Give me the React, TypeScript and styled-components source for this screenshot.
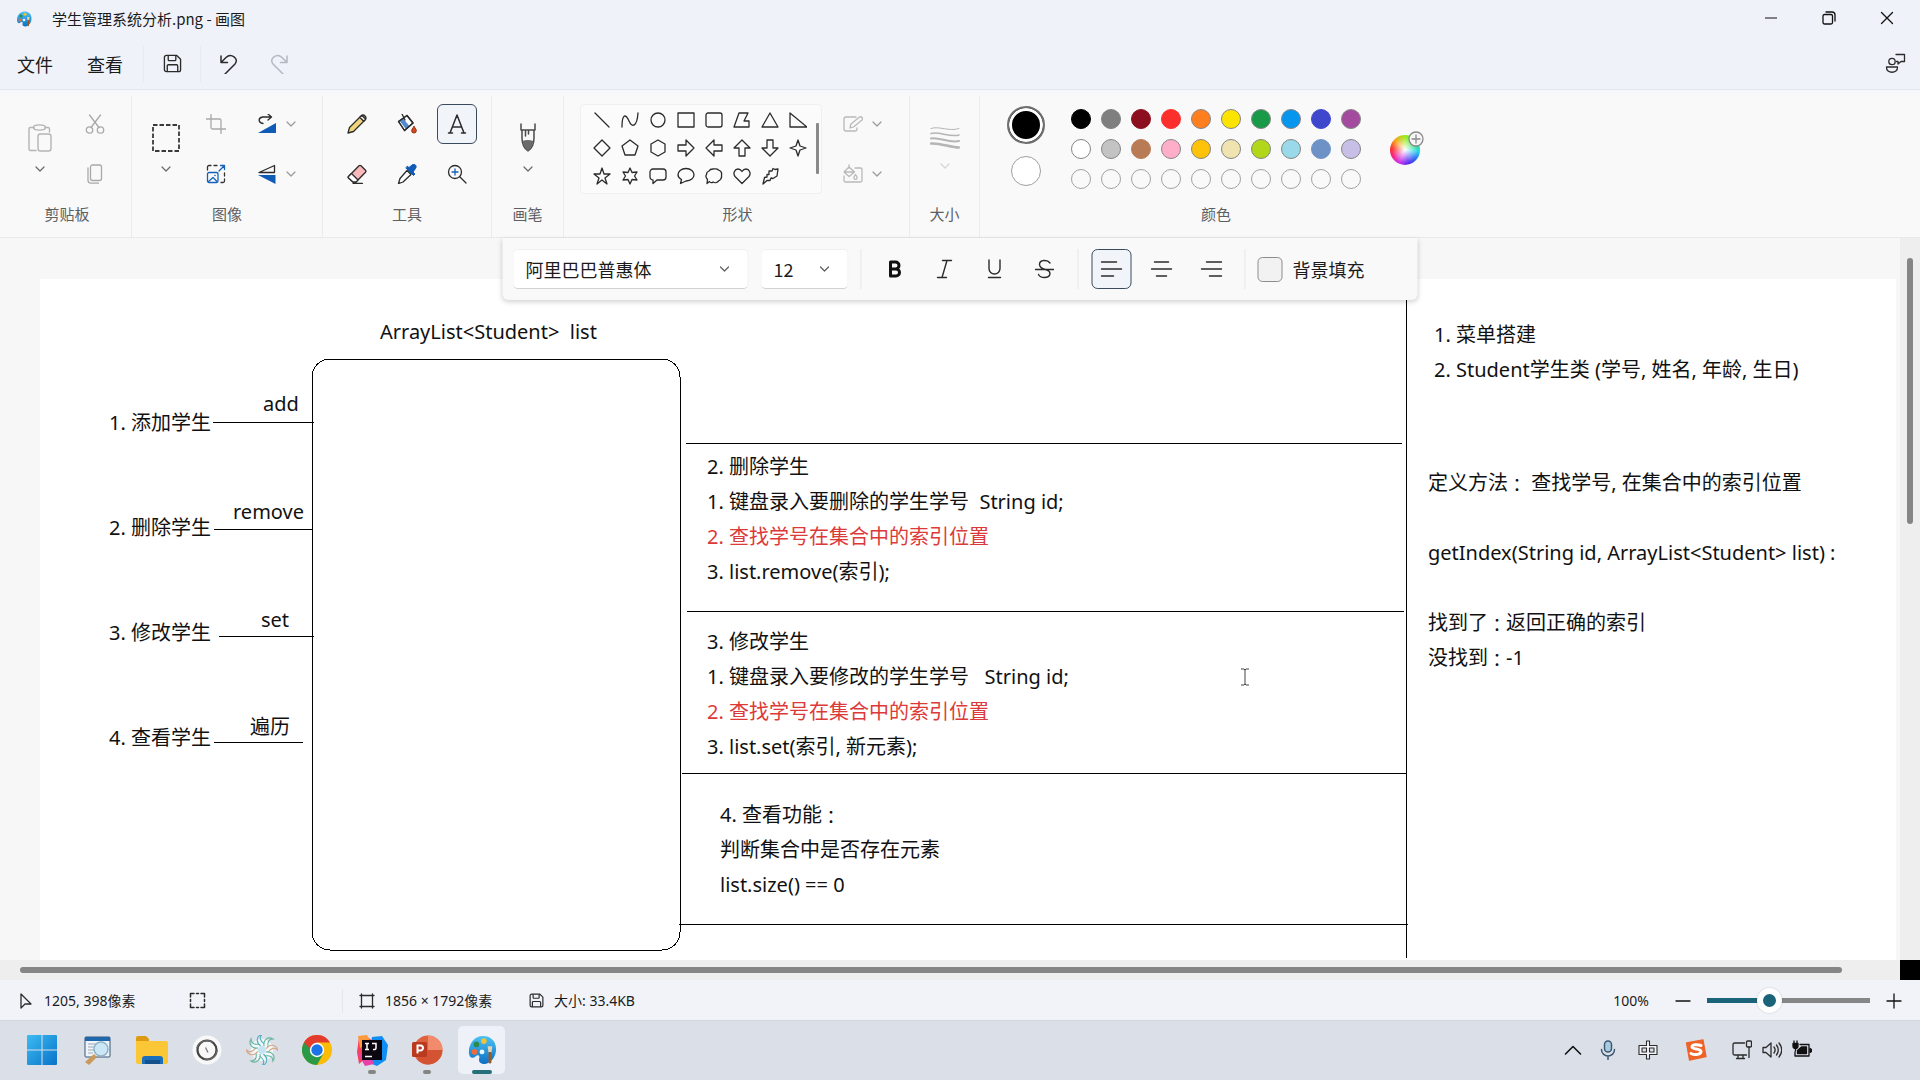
import React, { useState } from "react";
import styled, { createGlobalStyle } from "styled-components";

const UI_FONT = `"Noto Sans CJK SC", "Noto Sans", sans-serif`;
const CANVAS_FONT = `"Noto Sans", "Noto Sans CJK SC", sans-serif`;

const GlobalStyle = createGlobalStyle`
  *, *::before, *::after { box-sizing: border-box; }
  body { margin: 0; background: #eff2f8; overflow: hidden; }
  button { border: 0; padding: 0; margin: 0; background: transparent; font: inherit; color: inherit; }
  svg { display: block; flex: none; }
`;

const Window = styled.div`
  display: flex;
  flex-direction: column;
  height: 100vh;
  font-family: ${UI_FONT};
  color: #1b1b1b;
`;

/* ---------- title bar and menu ---------- */

const TitleBar = styled.header`
  display: flex;
  align-items: center;
  height: 38px;
  padding: 0 4px 0 16px;
  background: #eff2f8;
`;
const AppTitle = styled.h1`
  margin: 0 auto 0 20px;
  font-size: 15px;
  line-height: 20px;
  font-weight: 400;
`;
const CaptionButton = styled.button`
  display: grid;
  place-items: center;
  width: 58px;
  height: 36px;
  align-self: flex-start;
`;
const MenuBar = styled.nav`
  display: flex;
  align-items: center;
  height: 52px;
  background: #eff2f8;
  border-bottom: 1px solid #e3e6ec;
`;
const MenuButton = styled.button`
  width: 70px;
  height: 40px;
  font-size: 18px;
  line-height: 26px;
`;
const MenuIcon = styled.button<{ $end?: boolean }>`
  display: grid;
  place-items: center;
  width: 50px;
  height: 40px;
  margin-left: ${(p) => (p.$end ? "auto" : "0")};
`;
const Rule = styled.span`
  width: 1px;
  height: 36px;
  margin: 0 3px;
  background: #e8eaef;
`;

/* ---------- ribbon ---------- */

const Ribbon = styled.section`
  display: flex;
  height: 148px;
  padding-top: 3px;
  background: #f9f9fa;
  border-top: 3px solid #f5f7fc;
  border-bottom: 1px solid #e9e9e9;
`;
const Group = styled.div<{ $width: number; $inset?: number; $last?: boolean }>`
  display: flex;
  flex-direction: column;
  width: ${(p) => p.$width}px;
  padding: 3px 0 0 ${(p) => p.$inset ?? 0}px;
  border-right: ${(p) => (p.$last ? "0" : "1px solid #ececee")};
`;
const GroupBody = styled.div<{ $gap?: number }>`
  display: flex;
  align-items: center;
  justify-content: center;
  gap: ${(p) => p.$gap ?? 0}px;
  height: 100px;
`;
const GroupLabel = styled.span`
  font-size: 15px;
  line-height: 30px;
  text-align: center;
  color: #5f5f5f;
`;
const BigButton = styled.button<{ $faded?: boolean }>`
  display: flex;
  flex-direction: column;
  align-items: center;
  justify-content: center;
  gap: 10px;
  width: 50px;
  height: 80px;
  color: ${(p) => (p.$faded ? "#d6d6d6" : "#6a6a6a")};
`;
const CellGrid = styled.div<{ $columns: string }>`
  display: grid;
  grid-template-columns: ${(p) => p.$columns};
  grid-auto-rows: 50px;
  place-items: center;
`;
const ToolButton = styled.button<{ $active?: boolean }>`
  display: grid;
  place-items: center;
  width: 40px;
  height: 40px;
  border-radius: 6px;
  border: 1px solid ${(p) => (p.$active ? "#3c4b5c" : "transparent")};
  background: ${(p) => (p.$active ? "#f1f4f8" : "transparent")};
`;
const SplitButton = styled.button`
  display: flex;
  align-items: center;
  justify-content: center;
  gap: 8px;
  width: 64px;
  height: 40px;
  color: #9a9a9a;
`;
const ShapeBox = styled.div`
  display: flex;
  width: 242px;
  height: 90px;
  padding: 1px 0 0 7px;
  border: 1px solid #f0f0f0;
  border-radius: 4px;
  background: #fbfbfb;
`;
const ShapeGrid = styled.div`
  display: grid;
  grid-template-columns: repeat(8, 28px);
  grid-auto-rows: 28px;
`;
const ShapeButton = styled.button`
  display: grid;
  place-items: center;
`;
const ShapeThumb = styled.span`
  width: 3px;
  height: 51px;
  margin: 17px 0 0 4px;
  border-radius: 1px;
  background: #8a8a8a;
`;

/* ---------- colours ---------- */

const ActiveColours = styled.div`
  display: flex;
  flex-direction: column;
  align-items: center;
  gap: 12px;
  width: 40px;
  height: 100px;
  padding-top: 7px;
`;
const ActiveColour = styled.button<{ $size: number; $color: string; $ring?: boolean }>`
  width: ${(p) => p.$size}px;
  height: ${(p) => p.$size}px;
  border-radius: 50%;
  border: ${(p) => (p.$ring ? "2px solid #6f6f6f" : "1px solid #a0a0a0")};
  background: ${(p) => p.$color};
  box-shadow: ${(p) => (p.$ring ? "inset 0 0 0 3px #ffffff" : "none")};
`;
const SwatchGrid = styled.div`
  display: grid;
  grid-template-columns: repeat(10, 30px);
  grid-auto-rows: 30px;
  place-items: center;
`;
const Swatch = styled.button<{ $color: string; $edge: string }>`
  width: 20px;
  height: 20px;
  border-radius: 50%;
  border: 1px solid ${(p) => p.$edge};
  background: ${(p) => p.$color};
`;
const WheelButton = styled.button`
  position: relative;
  width: 40px;
  height: 40px;
  padding: 2px 0 0 4px;
`;
const Wheel = styled.span`
  display: block;
  width: 30px;
  height: 30px;
  border-radius: 50%;
  background: radial-gradient(circle, #ffffff 0%, rgba(255, 255, 255, 0) 62%),
    conic-gradient(#9bee1c, #2de06b 60deg, #20d8e8 95deg, #2a6cf4 130deg, #5a2cf0 165deg, #d136ea 205deg, #f5268c 240deg, #fb2f2f 275deg, #f9a51c 315deg, #9bee1c 360deg);
`;
const WheelBadge = styled.span`
  position: absolute;
  left: 22px;
  top: 2px;
`;

/* ---------- workspace ---------- */

const Workspace = styled.main`
  position: relative;
  display: grid;
  grid-template: minmax(0, 1fr) 20px / minmax(0, 1fr) 20px;
  flex: 1;
  min-height: 0;
  background: #eeeeef;
`;
const Viewport = styled.div`
  padding: 41px 4px 0 40px;
  overflow: hidden;
  background: #f7f7f8;
`;
const Paper = styled.div`
  position: relative;
  height: 100%;
  background: #ffffff;
`;
const VerticalTrack = styled.div`
  display: flex;
  justify-content: center;
  padding: 20px 0;
`;
const VerticalThumb = styled.span`
  width: 6px;
  height: 39%;
  border-radius: 3px;
  background: #858585;
`;
const HorizontalTrack = styled.div`
  display: flex;
  align-items: center;
  padding: 0 58px 0 20px;
`;
const HorizontalThumb = styled.span`
  flex: 1;
  height: 6px;
  border-radius: 3px;
  background: #858585;
`;
const Corner = styled.span`
  background: #000000;
`;
const Drawing = styled.svg`
  position: absolute;
  inset: 0;
  width: 100%;
  height: 100%;
`;
const Note = styled.div<{ $x: number; $y: number }>`
  position: absolute;
  left: ${(p) => p.$x}px;
  top: ${(p) => p.$y}px;
  font-family: ${CANVAS_FONT};
  font-size: 20px;
  line-height: 35px;
  white-space: pre;
  color: #111111;
`;
const NoteLine = styled.p<{ $red?: boolean }>`
  margin: 0;
  height: 35px;
  color: ${(p) => (p.$red ? "#dc3a3a" : "inherit")};
`;
const WideColon = styled.span`
  font-family: "Noto Sans CJK TC", sans-serif;
  font-size: 18px;
  line-height: 20px;
  vertical-align: -2px;
`;
const TextCursor = styled.span`
  position: absolute;
  left: 1201px;
  top: 389px;
`;

/* ---------- floating text toolbar ---------- */

const TextToolbar = styled.div`
  position: absolute;
  top: 0;
  left: 50%;
  transform: translateX(-50%);
  display: flex;
  align-items: center;
  height: 62px;
  padding: 0 53px 0 10px;
  background: #f9f9fa;
  border-radius: 0 0 6px 6px;
  box-shadow: 0 2px 5px rgba(0, 0, 0, 0.18);
`;
const SelectBox = styled.span<{ $width: number; $after: number }>`
  position: relative;
  width: ${(p) => p.$width}px;
  height: 40px;
  margin-right: ${(p) => p.$after}px;
`;
const Select = styled.select`
  appearance: none;
  width: 100%;
  height: 100%;
  padding: 0 36px 0 12px;
  border: 1px solid #efefef;
  border-bottom-color: #d2d2d2;
  border-radius: 5px;
  background: #ffffff;
  font-family: ${UI_FONT};
  font-size: 18px;
  color: #1b1b1b;
`;
const SelectArrow = styled.span`
  position: absolute;
  right: 18px;
  top: 14px;
  color: #5c5c5c;
  pointer-events: none;
`;
const Slot = styled.span`
  display: grid;
  place-items: center;
  width: 50px;
`;
const ToolbarRule = styled.span`
  width: 1px;
  height: 40px;
  margin: 0 8px;
  background: #e8e8e8;
`;
const FillLabel = styled.label`
  display: flex;
  align-items: center;
  gap: 10px;
  padding-left: 4px;
  font-size: 18px;
  line-height: 26px;
`;
const CheckBox = styled.input`
  appearance: none;
  width: 25px;
  height: 25px;
  margin: 0;
  border: 1px solid #8c8c8c;
  border-radius: 5px;
  background: #f2f2f2;
`;

/* ---------- status bar ---------- */

const StatusBar = styled.footer`
  display: flex;
  align-items: center;
  height: 40px;
  padding: 1px 18px 0 19px;
  background: #f1f3f9;
  font-family: ${CANVAS_FONT};
  font-size: 14px;
  line-height: 20px;
`;
const StatusItem = styled.span<{ $width?: number; $rule?: boolean; $inset?: number }>`
  display: flex;
  align-items: center;
  gap: 10px;
  height: 24px;
  width: ${(p) => (p.$width ? `${p.$width}px` : "auto")};
  padding-left: ${(p) => p.$inset ?? 0}px;
  border-right: ${(p) => (p.$rule ? "1px solid #e4e6ec" : "0")};
`;
const ZoomControls = styled.div`
  display: flex;
  align-items: center;
  gap: 16px;
  margin-left: auto;
`;
const ZoomValue = styled.span`
  margin-right: 10px;
`;
const ZoomStep = styled.button`
  display: grid;
  place-items: center;
  width: 16px;
  height: 24px;
`;
const ZoomSlider = styled.input<{ $fill: number }>`
  appearance: none;
  width: 163px;
  height: 26px;
  margin: 0;
  background: linear-gradient(90deg, #1b6379 ${(p) => p.$fill}%, #868686 ${(p) => p.$fill}%) center / 100% 5px no-repeat;
  &::-webkit-slider-thumb {
    appearance: none;
    width: 25px;
    height: 25px;
    border: 6px solid #ffffff;
    border-radius: 50%;
    background: #1b6379;
    box-shadow: 0 0 2px rgba(0, 0, 0, 0.2);
  }
`;

/* ---------- taskbar ---------- */

const Taskbar = styled.div`
  display: flex;
  align-items: center;
  height: 60px;
  padding: 0 103px 2px 14px;
  background: #dbdfe8;
  border-top: 1px solid #d2d6dd;
`;
const TaskButton = styled.button<{ $active?: boolean }>`
  position: relative;
  display: grid;
  place-items: center;
  width: 47px;
  height: 48px;
  margin: 0 4px;
  border-radius: 5px;
  background: ${(p) => (p.$active ? "#eef1f8" : "transparent")};
`;
const RunMark = styled.span<{ $active?: boolean }>`
  position: absolute;
  bottom: 0;
  left: 50%;
  width: ${(p) => (p.$active ? 20 : 8)}px;
  height: 4px;
  transform: translateX(-50%);
  border-radius: 2px;
  background: ${(p) => (p.$active ? "#26707a" : "#858585")};
`;
const Tray = styled.div`
  display: flex;
  margin-left: auto;
`;
const TrayButton = styled.button<{ $after?: number }>`
  display: grid;
  place-items: center;
  width: 30px;
  height: 40px;
  margin-right: ${(p) => p.$after ?? 0}px;
`;

/* ---------- icons ---------- */

type IconProps = { w?: number; h?: number; stroke?: string; sw?: number; children: React.ReactNode };
const Icon = ({ w = 20, h = w, stroke = "#2b2b2b", sw = 1.3, children }: IconProps) => (
  <svg width={w} height={h} viewBox={`0 0 ${w} ${h}`} fill="none" stroke={stroke} strokeWidth={sw} strokeLinecap="round" strokeLinejoin="round" aria-hidden="true">
    {children}
  </svg>
);

const Chevron = ({ stroke = "currentColor" }: { stroke?: string }) => (
  <Icon w={12} stroke={stroke} sw={1.2}><path d="M2 4l4 4 4-4" /></Icon>
);

const SaveIcon = ({ size = 20 }: { size?: number }) => (
  <svg width={size} height={size} viewBox="0 0 20 20" fill="none" stroke="#2b2b2b" strokeWidth={size < 18 ? 1.6 : 1.4} strokeLinejoin="round" aria-hidden="true">
    <path d="M3.500 1.500h11l4 4v11a2 2 0 0 1-2 2h-13a2 2 0 0 1-2-2v-13a2 2 0 0 1 2-2z" />
    <path d="M5.500 1.500v4.500a1 1 0 0 0 1 1h6a1 1 0 0 0 1-1V1.500M4.500 18.500v-6a1.200 1.200 0 0 1 1.200-1.200h8.600a1.200 1.200 0 0 1 1.200 1.200v6" />
  </svg>
);

const PaletteIcon = ({ size }: { size: number }) => (
  <svg width={size} height={size} viewBox="0 0 32 32" aria-hidden="true">
    <defs>
      <linearGradient id={`palette${size}`} x1="0" y1="0" x2="0" y2="1">
        <stop offset="0" stopColor="#4cc3f4" />
        <stop offset="1" stopColor="#0c6fc4" />
      </linearGradient>
    </defs>
    <path d="M17 1C8 1 2 9 2 18c0 6 4 8 7 5 3-3 5-1 4 2-1 4 2 6 6 6 7-1 12-8 12-16C31 6 25 1 17 1z" fill={`url(#palette${size})`} />
    <circle cx="8" cy="18" r="3" fill="#ee6b3b" />
    <circle cx="10" cy="10" r="3" fill="#2d8a4d" />
    <circle cx="18" cy="6.500" r="3" fill="#f2c230" />
    <circle cx="16" cy="18" r="2.600" fill="#e9f6ff" />
    <path d="M22 12h5l-1 7h-3z" fill="#e8d3b4" />
    <path d="M23 18h3v11a1.500 1.500 0 0 1-3 0z" fill="#9a5b22" />
  </svg>
);

const PasteIcon = () => (
  <Icon w={26} h={30} stroke="#b5b5b5" sw={1.4}>
    <path d="M7 4.500H3.500a1.500 1.500 0 0 0-1.500 1.500v20A1.500 1.500 0 0 0 3.500 27.500H9M18 4.500h3a1.500 1.500 0 0 1 1.500 1.500v3" />
    <ellipse cx="12.500" cy="4.500" rx="6" ry="2.600" />
    <rect x="11" y="11" width="13" height="17" rx="2.500" />
  </Icon>
);
const CutIcon = () => (
  <Icon stroke="#a9a9a9"><circle cx="4.500" cy="16" r="3.200" /><circle cx="15.500" cy="16" r="3.200" /><path d="M4.500 1l9.500 12.500M15.500 1L6 13.500" /></Icon>
);
const CopyIcon = () => (
  <Icon stroke="#a9a9a9"><rect x="5.500" y="1" width="11" height="15.500" rx="2" /><path d="M3 4v12.500A3 3 0 0 0 6 19.200h7.500" /></Icon>
);
const SelectIcon = () => (
  <Icon w={30} stroke="#3a3a3a" sw={1.8}><path d="M2 2h26v26H2z" strokeDasharray="4.500 2" strokeLinecap="butt" /></Icon>
);
const CropIcon = () => (
  <Icon stroke="#a9a9a9"><path d="M5 0v13.500a1.500 1.500 0 0 0 1.500 1.500H20M0 5h13.500A1.500 1.500 0 0 1 15 6.500V20" /></Icon>
);
const ResizeIcon = () => (
  <Icon>
    <path d="M1.500 6V3a1.500 1.500 0 0 1 1.500-1.500h2M8 1.500h3M18.500 9v3M18.500 15v2a1.500 1.500 0 0 1-1.500 1.500h-2" stroke="#333333" />
    <path d="M13 7l5.500-5.500M14.500 1.500h4v4" stroke="#1462b8" />
    <rect x="1.500" y="8.500" width="10.500" height="10" rx="1.500" stroke="#1462b8" />
    <path d="M2.500 17.500l4.500-4 4 4" stroke="#1462b8" />
    <circle cx="9" cy="11.500" r=".8" fill="#1462b8" stroke="none" />
  </Icon>
);
const RotateIcon = () => (
  <Icon><path d="M6 9.500C1.500 9 .5 4 5.500 3H14M11 0l3.500 3L11 6" /><path d="M1 19L19 9v10z" fill="#0f5bb5" stroke="none" /></Icon>
);
const FlipIcon = () => (
  <Icon><path d="M17.500 1.500v7H2z" /><path d="M1 11h17.500v9z" fill="#0f5bb5" stroke="none" /></Icon>
);
const PencilIcon = () => (
  <Icon><path d="M1 19l1.500-5.500L14 2a2.600 2.600 0 0 1 4 4L6.500 17.500z" fill="#efd67c" /><path d="M12.700 3.300l4 4L18.500 5 15 1.500z" fill="#f4f4f4" /></Icon>
);
const BucketIcon = () => (
  <Icon>
    <path d="M1.500 7.500L10 1.500l6 7.500-8.500 7.500z" fill="#ffffff" />
    <path d="M2.500 6.800l3.500-2.500 6.500 8-3.500 3z" fill="#1965ba" stroke="none" opacity=".75" />
    <path d="M1.500 7.500L10 1.500l6 7.500-8.500 7.500zM5 0l3 6" />
    <path d="M17 12.500c1.500 2 2.300 3 2.300 4.200a2.300 2.300 0 0 1-4.600 0c0-1.200.8-2.200 2.300-4.200z" fill="#d9481f" stroke="#8f2b10" strokeWidth="1" />
  </Icon>
);
const TextIcon = () => (
  <Icon w={22} sw={1.5}><path d="M4 20L11 2l7 18M6.500 14h9M2.500 20h4M15.500 20h4" /></Icon>
);
const EraserIcon = () => (
  <Icon><path d="M1.500 12.500L12 1.800a1.500 1.500 0 0 1 2 0l4.500 4.400a1.500 1.500 0 0 1 0 2L9 18H6l-4.500-4a1 1 0 0 1 0-1.500z" fill="#f9b9bb" /><path d="M1.500 12.500l3-3 6.500 6.500-2 2H6l-4.500-4a1 1 0 0 1 0-1.500z" fill="#fff" /><path d="M6 19.300h9.500" /></Icon>
);
const PickerIcon = () => (
  <Icon><path d="M10 6.500l4 4-8 7.500-4.500 1.500L3 14.500z" fill="#fff" /><path d="M9 4l7.500 7.500 1.500-1.500-2-2 2.500-3.500c2-2.500-1-5.500-3.500-3.500L12 3.500 10.500 2.500z" fill="#0f5bb5" stroke="#0f5bb5" strokeWidth="1" /></Icon>
);
const MagnifierIcon = () => (
  <Icon><circle cx="8" cy="8" r="6.500" /><path d="M13 13l6 6" /><path d="M8 5v6M5 8h6" stroke="#1462b8" /></Icon>
);
const BrushIcon = () => (
  <Icon w={18} h={30} stroke="#4a4a4a" sw={1.5}>
    <path d="M2 1v6h14V1M3 7v8c0 6 3 11 6 13 3-2 6-7 6-13V7M6.500 8v5M9.500 8v3" />
    <path d="M3.500 18c3-1.500 7-1.500 11 0-.7 4-3 8-5.500 10-2.500-2-4.800-6-5.500-10z" fill="#6b6b6b" stroke="none" />
  </Icon>
);
const OutlineIcon = () => (
  <Icon stroke="#b9b9b9"><path d="M13 3H3a2 2 0 0 0-2 2v10a2 2 0 0 0 2 2h9a2 2 0 0 0 2-2v-1" /><path d="M7 14l1-4 8.500-7a2 2 0 0 1 2.500 3L10.500 13z" /></Icon>
);
const FillIcon = () => (
  <Icon stroke="#b9b9b9"><path d="M12 4h5.500A1.500 1.500 0 0 1 19 5.500v11a1.500 1.500 0 0 1-1.500 1.500H2.500A1.500 1.500 0 0 1 1 16.500V12M6 1v3M1 8l5-5 5.500 5L6 12.500zM1 8h10M12.500 10.500c1 1.500 1.600 2.200 1.600 3.200a1.600 1.600 0 0 1-3.200 0c0-1 .6-1.700 1.600-3.200z" /></Icon>
);
const SizeIcon = () => (
  <Icon w={30} h={24} stroke="#b5b5b5" sw={1}>
    <path d="M1 2.500c8-3 18 3.500 28 0" strokeWidth="1" /><path d="M1 7.500c8-3 18 4.500 28 1.500" strokeWidth="1.500" />
    <path d="M1 12.500c8-2 18 5 28 2.500" strokeWidth="2" /><path d="M1 17.500c8-1 20 4 28 4" strokeWidth="2.500" />
  </Icon>
);

const SHAPES: [string, string][] = [
  ["直线", "M2 2l14 14"],
  ["曲线", "M1 16c0-14 4-13 7-6s8 6 9-8"],
  ["椭圆", "M9 2a7 7 0 1 0 0 14A7 7 0 1 0 9 2z"],
  ["矩形", "M1 2h16v14H1z"],
  ["圆角矩形", "M3 2h12a2 2 0 0 1 2 2v10a2 2 0 0 1-2 2H3a2 2 0 0 1-2-2V4a2 2 0 0 1 2-2z"],
  ["多边形", "M6 2h9l-4 8h5v6H1z"],
  ["三角形", "M9 2l8 14H1z"],
  ["直角三角形", "M1 2v14h17z"],
  ["菱形", "M9 1l8 8-8 8-8-8z"],
  ["五边形", "M9 1l8 6-3 9H4L1 7z"],
  ["六边形", "M9 1l7 4v8l-7 4-7-4V5z"],
  ["右箭头", "M1 6h8V1l8 8-8 8v-5H1z"],
  ["左箭头", "M17 6H9V1L1 9l8 8v-5h8z"],
  ["上箭头", "M6 17V9H1l8-8 8 8h-5v8z"],
  ["下箭头", "M6 1v8H1l8 8 8-8h-5V1z"],
  ["四角星", "M9 1l2 6 6 2-6 2-2 6-2-6-6-2 6-2z"],
  ["五角星", "M9 1l2 6h6l-5 4 2 6-5-4-5 4 2-6-5-4h6z"],
  ["六角星", "M9 1l2 4.500 5-.5-2.500 4 2.500 4-5-.5L9 17l-2-4.500-5 .5 2.500-4L2 5l5 .5z"],
  ["圆角标注", "M4 2h10a3 3 0 0 1 3 3v5a3 3 0 0 1-3 3H8l-4 3.500V13a3 3 0 0 1-3-3V5a3 3 0 0 1 3-3z"],
  ["椭圆标注", "M9 1.500c5 0 8 3 8 6.200S14 14 9 14l-5.500 2.500 1-4C2.500 11.500 1 10 1 7.700 1 4.500 4 1.500 9 1.500z"],
  ["云形标注", "M4 4c1-2 3-2 4-2s4-1 5.500 1C16 4 17 6 16.500 8c.5 3-1 5-3 6-1.500 2-4 2-5.500 1-1 1-2.500 1-3.500-.5L2 16.500l.5-4C1 11 .5 9 1.500 7.500 1.500 5.500 2.500 4.500 4 4z"],
  ["心形", "M9 16.500L2 9.500C-.5 6 2 2 5 2c2 0 3 1 4 2.500C10 3 11 2 13 2c3 0 5.500 4 3 7.500z"],
  ["闪电", "M8 4h3l1-2.500 2 1L17 2l-1 7-4 2.500-2-.5-1 2.500H6L2 17l1.500-6.500L6 10V7.500h2z"],
];

const COLOURS = [
  "#000000", "#7f7f7f", "#8c0f1f", "#fb2f2b", "#ff7f1f", "#fde400", "#189a49", "#0796ee", "#3f48cc", "#a44ba0",
  "#ffffff", "#c3c3c3", "#b97a56", "#ffaec9", "#ffc20a", "#efe4b0", "#b1d718", "#99d9ea", "#6f92c6", "#c8bfe7",
];
const DARK = new Set(["#000000", "#7f7f7f", "#8c0f1f", "#fb2f2b", "#b97a56", "#3f48cc", "#6f92c6"]);

type NoteData = { x: number; y: number; lines: string[]; red?: number };
const NOTES: NoteData[] = [
  { x: 340, y: 35, lines: ["ArrayList<Student>  list"] },
  { x: 223, y: 107, lines: ["add"] },
  { x: 193, y: 215, lines: ["remove"] },
  { x: 221, y: 323, lines: ["set"] },
  { x: 210, y: 430, lines: ["遍历"] },
  { x: 69, y: 126, lines: ["1. 添加学生"] },
  { x: 69, y: 231, lines: ["2. 删除学生"] },
  { x: 69, y: 336, lines: ["3. 修改学生"] },
  { x: 69, y: 441, lines: ["4. 查看学生"] },
  { x: 667, y: 170, red: 2, lines: ["2. 删除学生", "1. 键盘录入要删除的学生学号  String id;", "2. 查找学号在集合中的索引位置", "3. list.remove(索引);"] },
  { x: 667, y: 345, red: 2, lines: ["3. 修改学生", "1. 键盘录入要修改的学生学号   String id;", "2. 查找学号在集合中的索引位置", "3. list.set(索引, 新元素);"] },
  { x: 680, y: 518, lines: ["4. 查看功能：", "判断集合中是否存在元素", "list.size() == 0"] },
  { x: 1394, y: 38, lines: ["1. 菜单搭建", "2. Student学生类 (学号, 姓名, 年龄, 生日)"] },
  { x: 1388, y: 186, lines: ["定义方法： 查找学号, 在集合中的索引位置", "", "getIndex(String id, ArrayList<Student> list) :", "", "找到了：返回正确的索引", "没找到：-1"] },
];

const withColons = (line: string) =>
  line.split("：").map((part, i) => (
    <React.Fragment key={i}>
      {i > 0 && <WideColon>：</WideColon>}
      {part}
    </React.Fragment>
  ));

const CanvasDrawing = () => (
  <Drawing fill="none" stroke="#000000" shapeRendering="crispEdges" aria-hidden="true">
    <rect x="272" y="80" width="368" height="591" rx="18" />
    <path d="M173 143h101M174 250h98M179 357h95M174 463h89" />
    <path d="M646 164h716M647 332h717M642 494h724M639 645h729" />
    <path d="M1366 0v679" />
  </Drawing>
);

/* ---------- taskbar pictures ---------- */

const StartIcon = () => (
  <svg width="30" height="30" viewBox="0 0 30 30" aria-hidden="true">
    <defs><linearGradient id="start" x1="0" y1="0" x2="1" y2="1"><stop offset="0" stopColor="#3cbcf2" /><stop offset="1" stopColor="#0872c9" /></linearGradient></defs>
    <path d="M1 0h13.500v14.500H0V1a1 1 0 0 1 1-1zM15.500 0H29a1 1 0 0 1 1 1v13.500H15.500zM0 15.500h14.500V30H1a1 1 0 0 1-1-1zM15.500 15.500H30V29a1 1 0 0 1-1 1H15.500z" fill="url(#start)" />
  </svg>
);
const SearchAppIcon = () => (
  <svg width="30" height="30" viewBox="0 0 30 30" aria-hidden="true">
    <rect x="3" y="2" width="25" height="20" rx="1" fill="#eef4f8" stroke="#3b5676" /><path d="M3 2h25v4H3z" fill="#1e67ad" />
    <path d="M6 9h10M6 12h8M6 15h7M6 18h5" stroke="#9aa9b5" />
    <path d="M12 19l3 3-8 8-4-3z" fill="#c99a5b" /><circle cx="19" cy="14" r="7" fill="#c6e6f6" fillOpacity=".9" stroke="#8fb3c5" strokeWidth="1.500" />
  </svg>
);
const FolderIcon = () => (
  <svg width="32" height="28" viewBox="0 0 32 28" aria-hidden="true">
    <path d="M0 2a2 2 0 0 1 2-2h8l3 3v4H0z" fill="#dd9b12" /><path d="M0 5h30a2 2 0 0 1 2 2v19a2 2 0 0 1-2 2H2a2 2 0 0 1-2-2z" fill="#fcc736" />
    <path d="M6 28v-5a3 3 0 0 1 3-3h15a3 3 0 0 1 3 3v5z" fill="#1a6fba" /><path d="M9 24h15v4H9z" fill="#14508c" />
  </svg>
);
const RingAppIcon = () => (
  <svg width="30" height="30" viewBox="0 0 30 30" fill="none" aria-hidden="true">
    <circle cx="15" cy="15" r="14.500" fill="#f8f8f8" /><circle cx="15" cy="15" r="9.500" stroke="#444" strokeWidth="2.200" /><path d="M5 13c1-6 8-9 16-6M25 15c0 6-6 11-13 9" stroke="#666" strokeWidth="1.500" /><path d="M13.500 12.500l2.500 5" stroke="#777" strokeWidth="1.300" />
  </svg>
);
const SwirlIcon = () => (
  <svg width="32" height="30" viewBox="-16 -15 32 30" fill="none" aria-hidden="true">
    <circle r="11" fill="#f2f8fa" />
    {[0, 45, 90, 135, 180, 225, 270, 315].map((a, i) => (
      <g key={a} transform={`rotate(${a})`}>
        <path d="M2-4C1-10 6-14 11-11C7-11 5-8 6-3" stroke={i % 4 === 1 ? "#d8a685" : i % 2 ? "#53aebb" : "#63b59b"} strokeWidth="1.100" />
      </g>
    ))}
    <circle r="4" fill="#c3e4f0" />
  </svg>
);
const ChromeIcon = () => (
  <svg width="30" height="30" viewBox="0 0 30 30" aria-hidden="true">
    <circle cx="15" cy="15" r="15" fill="#fbbc05" />
    <path d="M2 7.500A15 15 0 0 0 15 30l6.500-11.500L15 15z" fill="#2b9a48" />
    <path d="M2 7.500l6.500 11.200L15 15V7.500L8 5z" fill="#2b9a48" /><path d="M2 7.500A15 15 0 0 1 28 7.500H15a7.500 7.500 0 0 0-7 5.500z" fill="#e33b2e" />
    <path d="M2 7.500l6.500 11.200 1-5.700L8 5z" fill="#2b9a48" /><path d="M2 7.500A15 15 0 0 1 10 1l3 7-5 5.500z" fill="#e33b2e" />
    <circle cx="15" cy="15" r="7.200" fill="#fff" /><circle cx="15" cy="15" r="5.700" fill="#1a73e8" />
  </svg>
);
const IdeaIcon = () => (
  <svg width="32" height="32" viewBox="0 0 32 32" aria-hidden="true">
    <path d="M3 3l7-1 8 6-8 16-7 6-2-12z" fill="#f9405f" /><path d="M2 2l9-1 4 8-11 5z" fill="#fc9a3c" /><path d="M16 3l10-1 6 9-2 15-9 6-10-4z" fill="#0f8df2" /><path d="M2 20l12 1 4 9-9 2z" fill="#e83fa8" />
    <rect x="6" y="6" width="20" height="20" fill="#0b0610" />
    <path d="M9 9.500h4M11 9.500v6M9 15.500h4M16 9.500h4v4.500q0 2-3 1.500M9 22.500h7" fill="none" stroke="#fff" strokeWidth="1.500" />
  </svg>
);
const SlidesIcon = () => (
  <svg width="32" height="30" viewBox="0 0 32 30" aria-hidden="true">
    <circle cx="17" cy="15" r="14.500" fill="#e0623d" /><path d="M17 .5A14.500 14.500 0 0 1 31.500 15H17z" fill="#f28b6c" /><path d="M17 15h14.500a14.500 14.500 0 0 1-26 9z" fill="#c8472a" opacity=".55" />
    <rect x="1" y="7" width="15" height="15" rx="1.500" fill="#b93a1e" />
    <path d="M6.500 18.500v-8h3a2.500 2.500 0 0 1 0 5h-3" fill="none" stroke="#fff" strokeWidth="2" />
  </svg>
);

const TASKS: { name: string; icon: React.ReactNode; running?: boolean; active?: boolean }[] = [
  { name: "开始", icon: <StartIcon /> },
  { name: "搜索", icon: <SearchAppIcon /> },
  { name: "文件资源管理器", icon: <FolderIcon /> },
  { name: "录屏", icon: <RingAppIcon /> },
  { name: "笔记", icon: <SwirlIcon /> },
  { name: "浏览器", icon: <ChromeIcon /> },
  { name: "开发工具", icon: <IdeaIcon />, running: true },
  { name: "演示文稿", icon: <SlidesIcon />, running: true },
  { name: "画图", icon: <PaletteIcon size={30} />, running: true, active: true },
];

export default function App() {
  const [zoom, setZoom] = useState(36);
  return (
    <>
      <GlobalStyle />
      <Window>
        <TitleBar>
          <PaletteIcon size={16} />
          <AppTitle>学生管理系统分析.png - 画图</AppTitle>
          <CaptionButton aria-label="最小化"><Icon w={12} stroke="#111" sw={1.2}><path d="M0 6h12" /></Icon></CaptionButton>
          <CaptionButton aria-label="还原"><Icon w={14} stroke="#111"><rect x="1" y="3.500" width="9.500" height="9.500" rx="1.500" /><path d="M4 1h6a3 3 0 0 1 3 3v6" /></Icon></CaptionButton>
          <CaptionButton aria-label="关闭"><Icon w={14} stroke="#111"><path d="M1.500 1.500l11 11M12.500 1.500l-11 11" /></Icon></CaptionButton>
        </TitleBar>

        <MenuBar>
          <MenuButton>文件</MenuButton>
          <MenuButton>查看</MenuButton>
          <Rule />
          <MenuIcon aria-label="保存"><SaveIcon size={19} /></MenuIcon>
          <Rule />
          <MenuIcon aria-label="撤消"><Icon sw={1.5}><path d="M2 2v6.500h6.500M2.500 8L7 3.500c5-5 13.500 1 9 6.500L6 20" /></Icon></MenuIcon>
          <MenuIcon aria-label="重做"><Icon sw={1.5} stroke="#b4b8c0"><path d="M18 2v6.500h-6.500M17.500 8L13 3.500C8-1.500-.5 4.500 4 10l10 10" /></Icon></MenuIcon>
          <MenuIcon aria-label="反馈" $end>
            <Icon w={22}><circle cx="8" cy="8.500" r="3.200" /><path d="M2.500 14h11c.5 7-11.500 7-11 0zM12 1.500h8.500v7H17l-3 2.500V8.500h-1.500" /></Icon>
          </MenuIcon>
        </MenuBar>

        <Ribbon>
          <Group $width={132} $inset={3}>
            <GroupBody $gap={5}>
              <BigButton aria-label="粘贴"><PasteIcon /><Chevron /></BigButton>
              <CellGrid $columns="50px">
                <ToolButton aria-label="剪切"><CutIcon /></ToolButton>
                <ToolButton aria-label="复制"><CopyIcon /></ToolButton>
              </CellGrid>
            </GroupBody>
            <GroupLabel>剪贴板</GroupLabel>
          </Group>

          <Group $width={191}>
            <GroupBody>
              <BigButton aria-label="选择"><SelectIcon /><Chevron /></BigButton>
              <CellGrid $columns="50px 72px">
                <ToolButton aria-label="裁剪"><CropIcon /></ToolButton>
                <SplitButton aria-label="旋转"><RotateIcon /><Chevron /></SplitButton>
                <ToolButton aria-label="调整大小"><ResizeIcon /></ToolButton>
                <SplitButton aria-label="翻转"><FlipIcon /><Chevron /></SplitButton>
              </CellGrid>
            </GroupBody>
            <GroupLabel>图像</GroupLabel>
          </Group>

          <Group $width={169}>
            <GroupBody>
              <CellGrid $columns="repeat(3, 50px)">
                <ToolButton aria-label="铅笔"><PencilIcon /></ToolButton>
                <ToolButton aria-label="填充"><BucketIcon /></ToolButton>
                <ToolButton aria-label="文本" $active><TextIcon /></ToolButton>
                <ToolButton aria-label="橡皮擦"><EraserIcon /></ToolButton>
                <ToolButton aria-label="颜色选取器"><PickerIcon /></ToolButton>
                <ToolButton aria-label="放大镜"><MagnifierIcon /></ToolButton>
              </CellGrid>
            </GroupBody>
            <GroupLabel>工具</GroupLabel>
          </Group>

          <Group $width={72}>
            <GroupBody><BigButton aria-label="画笔"><BrushIcon /><Chevron /></BigButton></GroupBody>
            <GroupLabel>画笔</GroupLabel>
          </Group>

          <Group $width={346} $inset={2}>
            <GroupBody $gap={9}>
              <ShapeBox>
                <ShapeGrid>
                  {SHAPES.map(([name, d]) => (
                    <ShapeButton key={name} aria-label={name}><Icon w={18} sw={1.3}><path d={d} /></Icon></ShapeButton>
                  ))}
                </ShapeGrid>
                <ShapeThumb />
              </ShapeBox>
              <CellGrid $columns="64px">
                <SplitButton aria-label="形状轮廓"><OutlineIcon /><Chevron /></SplitButton>
                <SplitButton aria-label="形状填充"><FillIcon /><Chevron /></SplitButton>
              </CellGrid>
            </GroupBody>
            <GroupLabel>形状</GroupLabel>
          </Group>

          <Group $width={70}>
            <GroupBody><BigButton aria-label="大小" $faded><SizeIcon /><Chevron /></BigButton></GroupBody>
            <GroupLabel>大小</GroupLabel>
          </Group>

          <Group $width={472} $last>
            <GroupBody $gap={20}>
              <ActiveColours>
                <ActiveColour aria-label="颜色 1" $size={38} $color="#000000" $ring />
                <ActiveColour aria-label="颜色 2" $size={30} $color="#ffffff" />
              </ActiveColours>
              <SwatchGrid>
                {COLOURS.map((c) => (
                  <Swatch key={c} aria-label={c} $color={c} $edge={DARK.has(c) ? c : "#858585"} />
                ))}
                {Array.from({ length: 10 }, (_, i) => (
                  <Swatch key={i} aria-label={`自定义 ${i + 1}`} $color="transparent" $edge="#a2a2a2" />
                ))}
              </SwatchGrid>
              <WheelButton aria-label="编辑颜色">
                <Wheel />
                <WheelBadge><Icon w={16} stroke="#8a8a8a"><circle cx="8" cy="8" r="7" fill="#f6f6f6" /><path d="M8 4v8M4 8h8" /></Icon></WheelBadge>
              </WheelButton>
            </GroupBody>
            <GroupLabel>颜色</GroupLabel>
          </Group>
        </Ribbon>

        <Workspace>
          <Viewport>
            <Paper>
              <CanvasDrawing />
              {NOTES.map((note) => (
                <Note key={`${note.x}-${note.y}`} $x={note.x} $y={note.y}>
                  {note.lines.map((line, i) => (
                    <NoteLine key={i} $red={note.red === i}>{withColons(line)}</NoteLine>
                  ))}
                </Note>
              ))}
              <TextCursor><Icon w={8} h={18} stroke="#444" sw={1}><path d="M0 1h3l1 1 1-1h3M4 2v14M0 17h3l1-1 1 1h3" /></Icon></TextCursor>
            </Paper>
          </Viewport>
          <VerticalTrack><VerticalThumb /></VerticalTrack>
          <HorizontalTrack><HorizontalThumb /></HorizontalTrack>
          <Corner />

          <TextToolbar>
            <SelectBox $width={236} $after={12}>
              <Select aria-label="字体" defaultValue="puhui"><option value="puhui">阿里巴巴普惠体</option></Select>
              <SelectArrow><Chevron /></SelectArrow>
            </SelectBox>
            <SelectBox $width={88} $after={4}>
              <Select aria-label="字号" defaultValue="12"><option value="12">12</option></Select>
              <SelectArrow><Chevron /></SelectArrow>
            </SelectBox>
            <ToolbarRule />
            <Slot><ToolButton aria-label="加粗"><Icon sw={3} stroke="#111"><path d="M6 3h5a3.500 3.500 0 0 1 0 7H6zM6 10h5.500a3.500 3.500 0 0 1 0 7H6z" /></Icon></ToolButton></Slot>
            <Slot><ToolButton aria-label="倾斜"><Icon sw={1.4}><path d="M8 1.500h9M3 18.500h9M12.500 1.500l-5 17" /></Icon></ToolButton></Slot>
            <Slot><ToolButton aria-label="下划线"><Icon sw={1.4}><path d="M4.500 1v8.500a5.500 5.500 0 0 0 11 0V1M4 18.500h12" /></Icon></ToolButton></Slot>
            <Slot><ToolButton aria-label="删除线"><Icon sw={1.4}><path d="M1 10.500h18M15.500 4C13 .5 5 .5 5 5.500c0 3 3 4.200 6 5 7 2 5 8-1 8-3 0-5-1-6-3" /></Icon></ToolButton></Slot>
            <ToolbarRule />
            <Slot><ToolButton aria-label="左对齐" $active><Icon w={22} sw={1.5}><path d="M1 4h15M1 11h20M1 18h12" /></Icon></ToolButton></Slot>
            <Slot><ToolButton aria-label="居中"><Icon w={22} sw={1.5}><path d="M4 4h14M1 11h20M6 18h10" /></Icon></ToolButton></Slot>
            <Slot><ToolButton aria-label="右对齐"><Icon w={22} sw={1.5}><path d="M6 4h15M1 11h20M9 18h12" /></Icon></ToolButton></Slot>
            <ToolbarRule />
            <FillLabel htmlFor="fill"><CheckBox id="fill" type="checkbox" />背景填充</FillLabel>
          </TextToolbar>
        </Workspace>

        <StatusBar>
          <StatusItem $width={170}>
            <Icon w={15} h={16}><path d="M2 1v14l4-4h6z" /></Icon>
            1205, 398像素
          </StatusItem>
          <StatusItem $width={154} $rule>
            <Icon w={17} sw={1.5}><path d="M1.500 5V1.500H5M12 1.500h3.500V5M15.500 12v3.500H12M5 15.500H1.500V12M7.500 1.500h2M7.500 15.500h2M1.500 7.500v2M15.500 7.500v2" /></Icon>
          </StatusItem>
          <StatusItem $width={186} $inset={16}>
            <Icon w={16}><path d="M2.500 1v14M13.500 1v14M1 2.500h14M1 13.500h14" /></Icon>
            1856 × 1792像素
          </StatusItem>
          <StatusItem>
            <SaveIcon size={15} />
            大小: 33.4KB
          </StatusItem>
          <ZoomControls>
            <ZoomValue>100%</ZoomValue>
            <ZoomStep aria-label="缩小"><Icon w={16} stroke="#111"><path d="M1 8h14" /></Icon></ZoomStep>
            <ZoomSlider type="range" aria-label="缩放" min={0} max={100} value={zoom} $fill={zoom} onChange={(e) => setZoom(Number(e.target.value))} />
            <ZoomStep aria-label="放大"><Icon w={16} stroke="#111"><path d="M1 8h14M8 1v14" /></Icon></ZoomStep>
          </ZoomControls>
        </StatusBar>

        <Taskbar>
          {TASKS.map((t) => (
            <TaskButton key={t.name} aria-label={t.name} $active={t.active}>
              {t.icon}
              {t.running && <RunMark $active={t.active} />}
            </TaskButton>
          ))}
          <Tray>
            <TrayButton aria-label="显示隐藏的图标" $after={5}><Icon w={18} sw={1.6} stroke="#111"><path d="M1.500 13L9 5.500l7.500 7.500" /></Icon></TrayButton>
            <TrayButton aria-label="麦克风" $after={10}><Icon stroke="#3b5a73" sw={1.5}><rect x="6.500" y="1" width="7" height="11" rx="3.500" fill="#a9cbe0" /><path d="M3.500 9.500a6.500 6.500 0 0 0 13 0M10 16v3.500" /></Icon></TrayButton>
            <TrayButton aria-label="中文输入" $after={18}><Icon sw={1.1}><path d="M8.500 1h3v4.500H19v9h-7.500V19h-3v-4.500H1v-9h7.500zM4 8h4.500v4H4zM11.500 8H16v4h-4.500z" fill="#f3f5f9" fillRule="evenodd" /></Icon></TrayButton>
            <TrayButton aria-label="输入法" $after={16}>
              <Icon w={22}><path d="M1.500 4L18 1l3 16.500L4.500 21z" fill="#ee6327" stroke="#ee6327" /><path d="M16 6.500c-4-1.500-9-1-9 1.500s9 1.500 9 4.500-6 4-10 2" stroke="#fff" strokeWidth="3" /></Icon>
            </TrayButton>
            <TrayButton aria-label="网络"><Icon><path d="M12.500 3H2.500A1.500 1.500 0 0 0 1 4.500v9A1.500 1.500 0 0 0 2.500 15h12M6 15v3.500M11 15v3.500M4.500 18.500h8" /><rect x="14.500" y="1" width="5" height="6" rx="1" /><path d="M17 7v10.500" /></Icon></TrayButton>
            <TrayButton aria-label="音量"><Icon><path d="M1 7.500h3L9 3v14l-5-4.500H1zM12 7c1.500 2 1.500 4 0 6M14.500 5c2.500 3.500 2.500 6.500 0 10M17 3c3.500 4.500 3.500 9.500 0 14" /></Icon></TrayButton>
            <TrayButton aria-label="电池"><Icon stroke="#111"><path d="M8 4.500h9v11.500H3V12" /><path d="M9.500 7h5v6.500H5.500v-3z" fill="#111" /><path d="M18 8.500l1.500 1v2l-1.500 1z" fill="#111" /><path d="M1 3.500h5V6a2.500 2.500 0 0 1-5 0zM2 1v2M5 1v2M3.500 8v3" fill="#111" /></Icon></TrayButton>
          </Tray>
        </Taskbar>
      </Window>
    </>
  );
}
